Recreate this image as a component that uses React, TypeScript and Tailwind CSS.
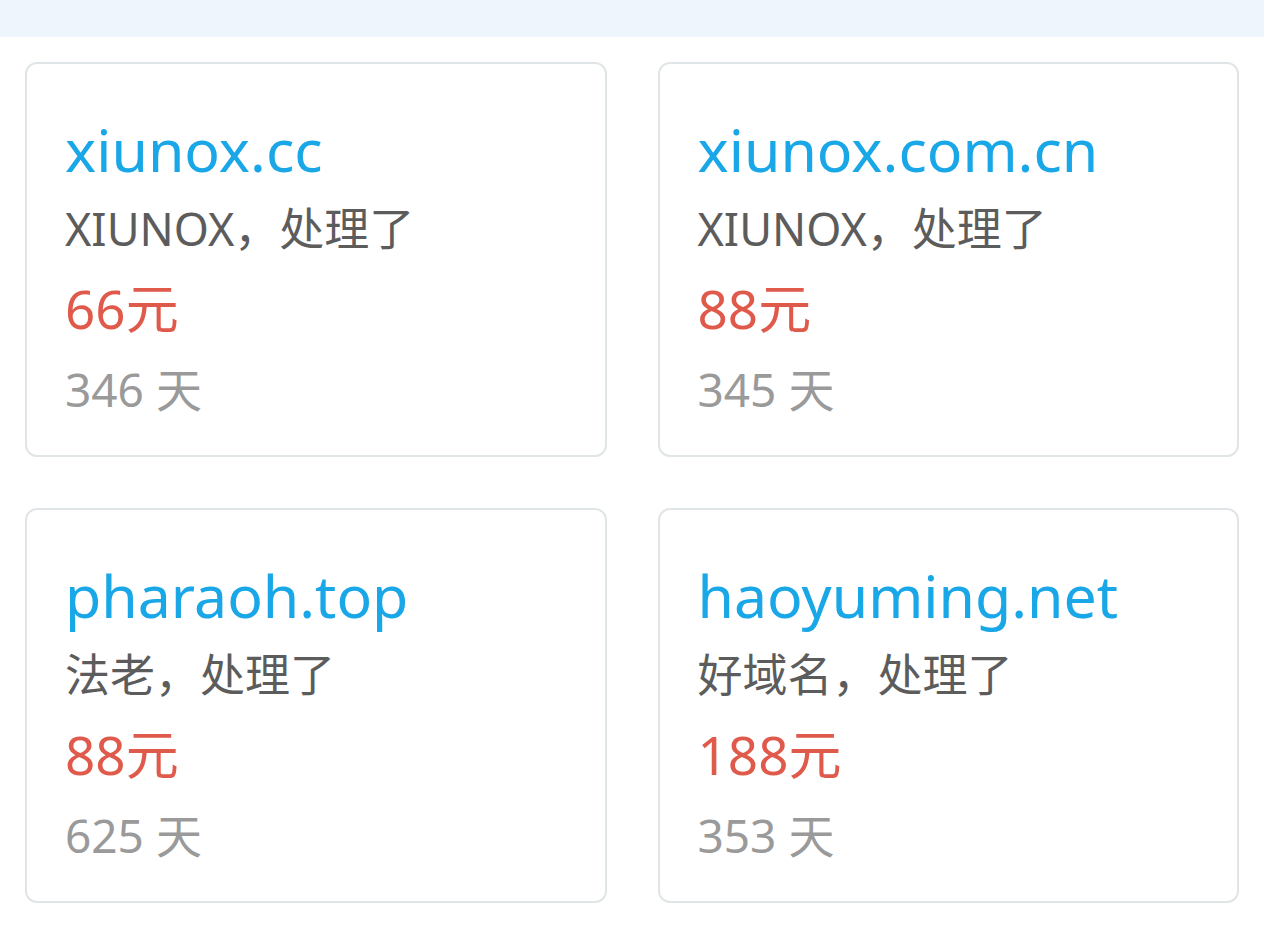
const domains = [
  { name: 'xiunox.cc', desc: 'XIUNOX，处理了', price: '66元', days: '346 天' },
  { name: 'xiunox.com.cn', desc: 'XIUNOX，处理了', price: '88元', days: '345 天' },
  { name: 'pharaoh.top', desc: '法老，处理了', price: '88元', days: '625 天' },
  { name: 'haoyuming.net', desc: '好域名，处理了', price: '188元', days: '353 天' },
];

function DomainCard({ d }: { d: (typeof domains)[number] }) {
  return (
    <div className="rounded-xl border-2 border-[#e0e5e7] bg-white pl-[38px] pr-4 pt-[45px] pb-[26px]">
      <div className="text-[59px] leading-[80px] text-[#19a7e8]">{d.name}</div>
      <div className="text-[45px] leading-[80px] text-[#5c5c5c]">{d.desc}</div>
      <div className="text-[53px] leading-[80px] text-[#e05a4b]">{d.price}</div>
      <div className="text-[46px] leading-[80px] text-[#9a9a9a]">{d.days}</div>
    </div>
  );
}

export default function App() {
  return (
    <div
      className="min-h-[948px] bg-white"
      style={{ fontFamily: '"Noto Sans", "Noto Sans CJK SC", sans-serif' }}
    >
      <div className="h-[37px] bg-[#eef5fd]" />
      <div className="grid grid-cols-2 gap-[51px] px-[25px] pt-[25px]">
        {domains.map((d) => (
          <DomainCard key={d.name} d={d} />
        ))}
      </div>
    </div>
  );
}
